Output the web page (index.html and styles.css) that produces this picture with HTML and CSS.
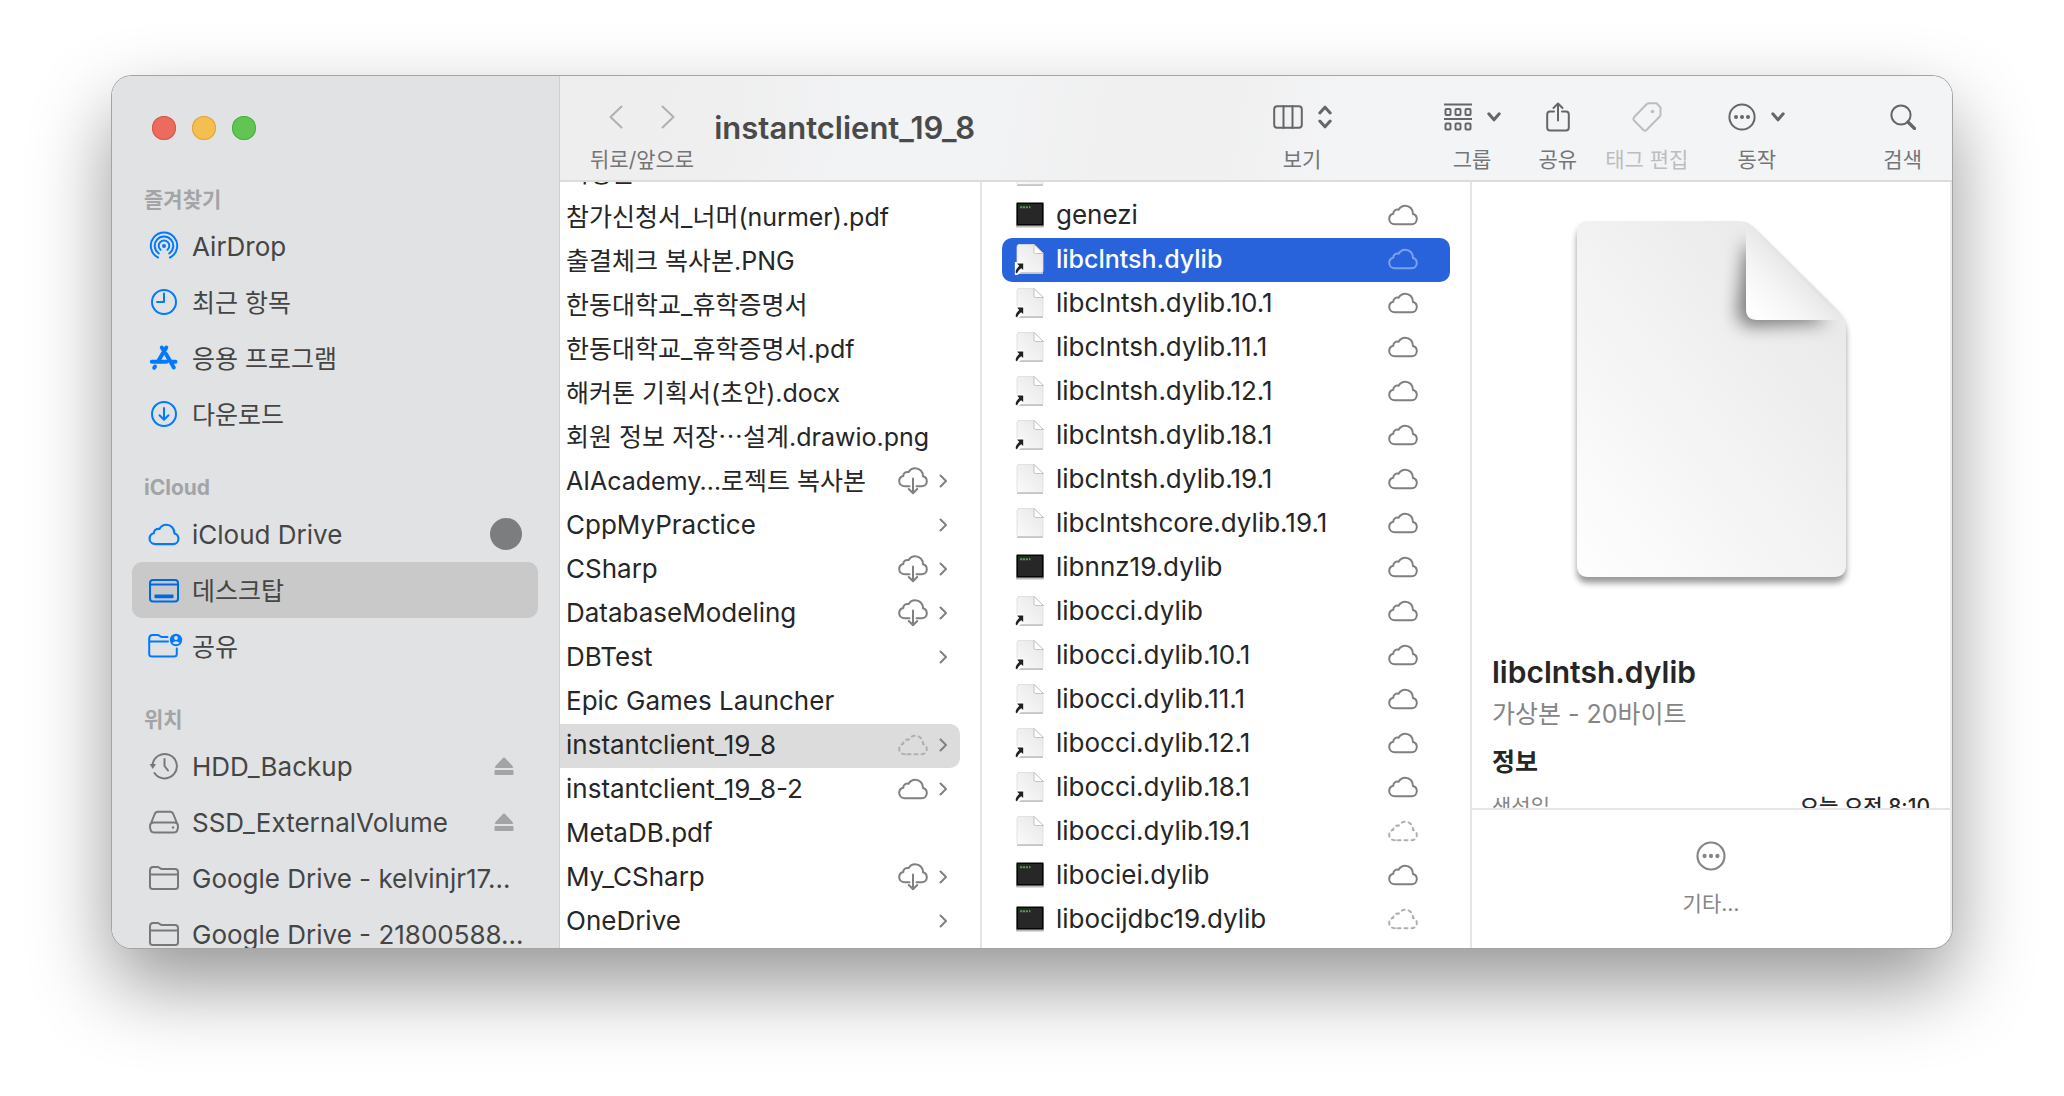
FILE: index.html
```
<!DOCTYPE html>
<html lang="ko">
<head>
<meta charset="utf-8">
<meta name="viewport" content="width=device-width, initial-scale=1">
<title>instantclient_19_8</title>
<link rel="stylesheet" href="styles.css">
</head>
<body>
<svg class="sprite" aria-hidden="true">
  <defs>
    <linearGradient id="paper" x1="1" y1="0" x2="0" y2="1">
      <stop offset="0" stop-color="#e6e6e6"/><stop offset="1" stop-color="#fbfbfb"/>
    </linearGradient>
  </defs>
  <symbol id="cloud" viewBox="0 0 30 22"><path d="M7 20.2C3.600 20.200 1.200 17.900 1.200 15C1.200 12.300 2.900 10.300 5.300 9.800C5.100 7.100 7.700 5 10.600 5.800C12 3.200 14.200 1.700 17.200 1.700C21.700 1.700 25 5.200 25 10C27.300 10.600 28.800 12.500 28.800 15C28.800 18 26.700 20.200 23.700 20.200Z"/></symbol>
  <symbol id="cloud-down" viewBox="0 0 30 28"><path d="M11.500 19.200H7C3.600 19.200 1.200 17 1.200 14.200C1.200 11.500 2.900 9.500 5.300 9C5.100 6.400 7.700 4.300 10.600 5.100C12 2.600 14.200 1.200 17.200 1.200C21.700 1.200 25 4.600 25 9.300C27.300 9.900 28.800 11.700 28.800 14.200C28.800 17.100 26.700 19.200 23.700 19.200H18.500M15 11.500V26M10.800 22L15 26.200L19.200 22"/></symbol>
  <symbol id="chev" viewBox="0 0 8 14"><path d="M1.500 1.500L7 7L1.500 12.500"/></symbol>
  <symbol id="down" viewBox="0 0 14 10"><path d="M1.800 1.800L7 7.800L12.200 1.800"/></symbol>
  <symbol id="folder" viewBox="0 0 32 32"><path d="M2 24.500V8.500Q2 5 5 5H9.500C11.500 5 12 7 14 7H27Q30 7 30 10V24.500Q30 27 27 27H5Q2 27 2 24.500ZM2 12.500H30"/></symbol>
  <symbol id="eject" viewBox="0 0 32 32"><path d="M15.200 7.800Q16 7 16.800 7.800L24.800 16.200Q25.800 18 24 18H8Q6.200 18 7.200 16.200Z"/><rect x="6.500" y="20" width="19" height="5" rx="1"/></symbol>
  <symbol id="doc" viewBox="0 0 28 30"><path d="M3 .5H18L27 9V27Q27 29 25 29H3Q1 29 1 27V2.500Q1 .5 3 .5Z" fill="url(#paper)" stroke="#dcdcdc" stroke-width=".8"/><path d="M2 29.200H26" stroke="#c4c4c4"/><path d="M18 .8V8Q18 9.500 19.500 9.500H27Z" fill="#fff" stroke="#bdbdbd" stroke-width=".9"/></symbol>
  <symbol id="alias" viewBox="0 0 10 14"><path d="M0 0H10V10H7.500L3 14H0Z" fill="#fff"/><path d="M2.500 1.500H9V8.500L6.800 6.600C4.800 8 3.300 9.600 2.300 12.500L.8 11C1.300 8 2.800 5.800 4.700 4.200Z" fill="#222"/></symbol>
  <symbol id="exec" viewBox="0 0 28 26"><rect x="0" y="1.500" width="28" height="24" rx="1" fill="#b9b9b9"/><rect x=".5" y=".5" width="27" height="23" fill="#050505"/><rect x="2" y="2" width="24" height="20" fill="#272727"/><path d="M4 4.300h2.400v2h-2.400zM7 4.300h2v2h-2zM9.800 4.300h2.200v2h-2.200zM13 4h1.400v2.300h-1.400z" fill="#4f9a4f"/></symbol>
  <symbol id="more" viewBox="0 0 28 28"><circle cx="14" cy="14" r="12.600"/><g stroke="none" fill="currentColor"><circle cx="8" cy="14" r="2"/><circle cx="14" cy="14" r="2"/><circle cx="20" cy="14" r="2"/></g></symbol>
</svg>

<div class="window">
  <aside class="sidebar">
    <div class="lights">
      <button class="light red" aria-label="닫기"></button>
      <button class="light yellow" aria-label="최소화"></button>
      <button class="light green" aria-label="확대"></button>
    </div>
    <nav>
      <h2>즐겨찾기</h2>
      <a class="item" href="#"><svg class="ico" viewBox="0 0 32 32"><path d="M10 27.500A13.200 13.200 0 1 1 22 27.500M10.800 23.500A9.300 9.300 0 1 1 21.200 23.500M12.500 19.800A5.300 5.300 0 1 1 19.500 19.800" /><circle cx="16" cy="16" r="2" class="solid"/></svg><span>AirDrop</span></a>
      <a class="item ko" href="#"><svg class="ico" viewBox="0 0 32 32"><circle cx="16" cy="16" r="12"/><path d="M16 7.500V16H9"/></svg><span>최근 항목</span></a>
      <a class="item ko" href="#"><svg class="ico thick" viewBox="0 0 32 32"><path d="M18.300 5.500L10 19.500M13.800 5.500L15.700 8.500M18 12L25.800 25.500M3.800 19.700H18.500M24 19.700H27.500M7 24.500L6.200 25.800"/></svg><span>응용 프로그램</span></a>
      <a class="item ko" href="#"><svg class="ico" viewBox="0 0 32 32"><circle cx="16" cy="16" r="12"/><path d="M16 10V21.500M11.500 17.300L16 21.700L20.500 17.300"/></svg><span>다운로드</span></a>
      <h2>iCloud</h2>
      <a class="item" href="#"><svg class="ico" viewBox="-1 -5 32 32"><use href="#cloud" x="-1" y="0" width="32" height="23"/></svg><span>iCloud Drive</span><i class="progress"></i></a>
      <a class="item ko current" href="#"><svg class="ico" viewBox="0 0 32 32"><rect x="2" y="6" width="28" height="21.500" rx="3"/><path d="M2 10.500H30"/><rect x="6.500" y="20.500" width="19" height="3.800" rx=".8" class="solid"/></svg><span>데스크탑</span></a>
      <a class="item ko" href="#"><svg class="ico" viewBox="0 0 32 32"><path d="M19.500 7H14C12 7 11.500 5 9.500 5H4.500Q1.200 5 1.200 8.500V24Q1.200 26.500 4 26.500H26Q28.800 26.500 28.800 24V18.500M1.200 11.500H20"/><circle cx="28" cy="10" r="6.200" class="solid"/><circle cx="28" cy="8" r="1.900" fill="#e1e2e4" stroke="none"/><path d="M24.300 13Q28 9.300 31.700 13Q28 15.600 24.300 13Z" fill="#e1e2e4" stroke="none"/></svg><span>공유</span></a>
      <h2>위치</h2>
      <a class="item gray" href="#"><svg class="ico" viewBox="0 0 32 32"><path d="M4.500 15A12.200 12.200 0 1 1 6.500 23M16.500 9V16L20 20.500"/><path d="M1.500 14H8L4.800 19Z" class="solid"/></svg><span>HDD_Backup</span><svg class="eject"><use href="#eject"/></svg></a>
      <a class="item gray" href="#"><svg class="ico" viewBox="0 0 32 32"><path d="M2.500 18.500L6.500 8.500Q7.500 5.800 10 5.800H22Q24.500 5.800 25.500 8.500L29.500 18.500M6 16.500H26Q30 16.500 30 20Q30 26.500 26 26.500H6Q2 26.500 2 20Q2 16.500 6 16.500Z"/><circle cx="25" cy="21.500" r="1.200" class="solid"/></svg><span>SSD_ExternalVolume</span><svg class="eject"><use href="#eject"/></svg></a>
      <a class="item gray" href="#"><svg class="ico"><use href="#folder"/></svg><span>Google Drive - kelvinjr17…</span></a>
      <a class="item gray" href="#"><svg class="ico"><use href="#folder"/></svg><span>Google Drive - 21800588…</span></a>
    </nav>
  </aside>

  <main class="main">
    <header class="toolbar">
      <div class="tool history">
        <div class="glyphs">
          <button aria-label="뒤로"><svg width="14" height="24" viewBox="0 0 14 24"><path d="M12.500 1.500L1.500 12L12.500 22.500"/></svg></button>
          <button aria-label="앞으로"><svg width="14" height="24" viewBox="0 0 14 24"><path d="M1.500 1.500L12.500 12L1.500 22.500"/></svg></button>
        </div>
        <span>뒤로/앞으로</span>
      </div>
      <h1>instantclient_19_8</h1>
      <button class="tool view"><span class="glyphs"><svg width="30" height="26" viewBox="0 0 30 26"><rect x="1.200" y="2.200" width="27.600" height="21.600" rx="3"/><path d="M10.500 2V24M19.500 2V24"/></svg><svg class="bold" width="14" height="24" viewBox="0 0 14 24"><path d="M1.800 8L7 2.200L12.200 8M1.800 16L7 21.800L12.200 16"/></svg></span><span>보기</span></button>
      <button class="tool group"><span class="glyphs"><svg width="28" height="28" viewBox="0 0 28 28"><path d="M.5 1.500H27.500M.5 16H27.500"/><g><rect x="1.500" y="6" width="5" height="6" rx="1"/><rect x="11.500" y="6" width="5" height="6" rx="1"/><rect x="21.500" y="6" width="5" height="6" rx="1"/><rect x="1.500" y="20.500" width="5" height="6" rx="1"/><rect x="11.500" y="20.500" width="5" height="6" rx="1"/><rect x="21.500" y="20.500" width="5" height="6" rx="1"/></g></svg><svg class="bold" width="14" height="10"><use href="#down"/></svg></span><span>그룹</span></button>
      <button class="tool share"><span class="glyphs"><svg width="24" height="30" viewBox="0 0 24 30"><path d="M8 9.500H4Q1.200 9.500 1.200 12.500V25.500Q1.200 28.500 4 28.500H20Q22.800 28.500 22.800 25.500V12.500Q22.800 9.500 20 9.500H16M12 18.500V1.800M7.500 6L12 1.500L16.500 6"/></svg></span><span>공유</span></button>
      <button class="tool tag" disabled><span class="glyphs"><svg width="30" height="30" viewBox="0 0 30 30"><path d="M14.500 2.200Q15.700 1.200 17.200 1.200H24.500L28.500 5.500V12.500Q28.500 13.800 27.500 14.800L14.500 28Q13 29.200 11.500 28L2 18.500Q.8 17 2 15.300Z"/><circle cx="20.500" cy="9.500" r="1.800" class="solid"/></svg></span><span>태그 편집</span></button>
      <button class="tool action"><span class="glyphs"><svg width="28" height="28"><use href="#more"/></svg><svg class="bold" width="14" height="10"><use href="#down"/></svg></span><span>동작</span></button>
      <button class="tool search"><span class="glyphs"><svg width="26" height="26" viewBox="0 0 26 26"><circle cx="11" cy="11" r="9.600"/><path d="M18 18L24.500 24.500" stroke-width="3.200"/></svg></span><span>검색</span></button>
    </header>

    <div class="columns">
      <ul class="col folders">
        <li class="ko"><span>지정본</span></li>
        <li class="ko"><span>참가신청서_너머(nurmer).pdf</span></li>
        <li class="ko"><span>출결체크 복사본.PNG</span></li>
        <li class="ko"><span>한동대학교_휴학증명서</span></li>
        <li class="ko"><span>한동대학교_휴학증명서.pdf</span></li>
        <li class="ko"><span>해커톤 기획서(초안).docx</span></li>
        <li class="ko"><span>회원 정보 저장⋯설계.drawio.png</span></li>
        <li class="ko"><span>AIAcademy…로젝트 복사본</span><svg class="cd"><use href="#cloud-down"/></svg><svg class="go"><use href="#chev"/></svg></li>
        <li><span>CppMyPractice</span><svg class="go"><use href="#chev"/></svg></li>
        <li><span>CSharp</span><svg class="cd"><use href="#cloud-down"/></svg><svg class="go"><use href="#chev"/></svg></li>
        <li><span>DatabaseModeling</span><svg class="cd"><use href="#cloud-down"/></svg><svg class="go"><use href="#chev"/></svg></li>
        <li><span>DBTest</span><svg class="go"><use href="#chev"/></svg></li>
        <li><span>Epic Games Launcher</span></li>
        <li class="open"><span>instantclient_19_8</span><svg class="cl dashed"><use href="#cloud"/></svg><svg class="go"><use href="#chev"/></svg></li>
        <li><span>instantclient_19_8-2</span><svg class="cl"><use href="#cloud"/></svg><svg class="go"><use href="#chev"/></svg></li>
        <li><span>MetaDB.pdf</span></li>
        <li><span>My_CSharp</span><svg class="cd"><use href="#cloud-down"/></svg><svg class="go"><use href="#chev"/></svg></li>
        <li><span>OneDrive</span><svg class="go"><use href="#chev"/></svg></li>
      </ul>

      <ul class="col files">
        <li><svg class="fi"><use href="#doc"/></svg><span>BASIC_README</span></li>
        <li><svg class="fi"><use href="#exec"/></svg><span>genezi</span><svg class="cl"><use href="#cloud"/></svg></li>
        <li class="selected"><svg class="fi"><use href="#doc"/><use href="#alias" x="-2" y="18" width="11" height="13"/></svg><span>libclntsh.dylib</span><svg class="cl"><use href="#cloud"/></svg></li>
        <li><svg class="fi"><use href="#doc"/><use href="#alias" x="-2" y="18" width="11" height="13"/></svg><span>libclntsh.dylib.10.1</span><svg class="cl"><use href="#cloud"/></svg></li>
        <li><svg class="fi"><use href="#doc"/><use href="#alias" x="-2" y="18" width="11" height="13"/></svg><span>libclntsh.dylib.11.1</span><svg class="cl"><use href="#cloud"/></svg></li>
        <li><svg class="fi"><use href="#doc"/><use href="#alias" x="-2" y="18" width="11" height="13"/></svg><span>libclntsh.dylib.12.1</span><svg class="cl"><use href="#cloud"/></svg></li>
        <li><svg class="fi"><use href="#doc"/><use href="#alias" x="-2" y="18" width="11" height="13"/></svg><span>libclntsh.dylib.18.1</span><svg class="cl"><use href="#cloud"/></svg></li>
        <li><svg class="fi"><use href="#doc"/></svg><span>libclntsh.dylib.19.1</span><svg class="cl"><use href="#cloud"/></svg></li>
        <li><svg class="fi"><use href="#doc"/></svg><span>libclntshcore.dylib.19.1</span><svg class="cl"><use href="#cloud"/></svg></li>
        <li><svg class="fi"><use href="#exec"/></svg><span>libnnz19.dylib</span><svg class="cl"><use href="#cloud"/></svg></li>
        <li><svg class="fi"><use href="#doc"/><use href="#alias" x="-2" y="18" width="11" height="13"/></svg><span>libocci.dylib</span><svg class="cl"><use href="#cloud"/></svg></li>
        <li><svg class="fi"><use href="#doc"/><use href="#alias" x="-2" y="18" width="11" height="13"/></svg><span>libocci.dylib.10.1</span><svg class="cl"><use href="#cloud"/></svg></li>
        <li><svg class="fi"><use href="#doc"/><use href="#alias" x="-2" y="18" width="11" height="13"/></svg><span>libocci.dylib.11.1</span><svg class="cl"><use href="#cloud"/></svg></li>
        <li><svg class="fi"><use href="#doc"/><use href="#alias" x="-2" y="18" width="11" height="13"/></svg><span>libocci.dylib.12.1</span><svg class="cl"><use href="#cloud"/></svg></li>
        <li><svg class="fi"><use href="#doc"/><use href="#alias" x="-2" y="18" width="11" height="13"/></svg><span>libocci.dylib.18.1</span><svg class="cl"><use href="#cloud"/></svg></li>
        <li><svg class="fi"><use href="#doc"/></svg><span>libocci.dylib.19.1</span><svg class="cl dashed"><use href="#cloud"/></svg></li>
        <li><svg class="fi"><use href="#exec"/></svg><span>libociei.dylib</span><svg class="cl"><use href="#cloud"/></svg></li>
        <li><svg class="fi"><use href="#exec"/></svg><span>libocijdbc19.dylib</span><svg class="cl dashed"><use href="#cloud"/></svg></li>
      </ul>

      <section class="preview">
        <div class="details">
          <svg class="page" width="290" height="380" viewBox="0 0 290 380">
            <defs>
              <linearGradient id="sheet" x1=".9" y1=".2" x2=".1" y2="1"><stop offset="0" stop-color="#e9e9e9"/><stop offset="1" stop-color="#fefefe"/></linearGradient>
              <linearGradient id="fold" x1=".56" y1=".44" x2=".1" y2=".9"><stop offset="0" stop-color="#e4e4e4"/><stop offset=".5" stop-color="#f4f4f4"/><stop offset="1" stop-color="#fefefe"/></linearGradient>
              <filter id="soft" x="-20%" y="-20%" width="140%" height="140%"><feGaussianBlur stdDeviation="3"/></filter>
              <filter id="softer" x="-40%" y="-40%" width="180%" height="180%"><feGaussianBlur stdDeviation="9"/></filter>
              <clipPath id="outline"><path d="M22 10H174Q182 10 189 17L272 99Q280 107 280 118V354Q280 366 268 366H22Q11 366 11 354V22Q11 10 22 10Z"/></clipPath>
            </defs>
            <path filter="url(#soft)" opacity=".4" d="M22 16H174Q182 16 189 23L272 105Q280 113 280 124V360Q280 372 268 372H22Q11 372 11 360V28Q11 16 22 16Z"/>
            <g clip-path="url(#outline)">
              <path fill="url(#sheet)" d="M0 0H290V380H0Z"/>
              <path filter="url(#softer)" opacity=".5" d="M180 30L172 98Q170 114 186 115L262 111L180 30Z"/>
              <path fill="url(#fold)" d="M180 11V98Q180 109 191 109H277Z"/>
            </g>
          </svg>
          <h3>libclntsh.dylib</h3>
          <p class="kind">가상본 - 20바이트</p>
          <h4>정보</h4>
          <dl><dt>생성일</dt><dd>오늘 오전 8:10</dd></dl>
        </div>
        <footer>
          <button class="etc"><svg width="30" height="30"><use href="#more"/></svg><span>기타…</span></button>
        </footer>
      </section>
    </div>
  </main>
</div>
</body>
</html>
```
FILE: styles.css
```
* { box-sizing: border-box; margin: 0; padding: 0; }

body {
  background: #fff;
  color: #262626;
  font-family: Inter, "Noto Sans CJK KR", sans-serif;
  font-size: 26px;
  line-height: 44px;
  overflow: hidden;
}

button {
  border: 0;
  background: none;
  color: inherit;
  font: inherit;
}

svg {
  flex: none;
  fill: none;
  stroke: currentColor;
  stroke-width: 2;
  stroke-linecap: round;
  stroke-linejoin: round;
}

.sprite { position: absolute; width: 0; height: 0; }
.solid { fill: currentColor; stroke: none; }
.ko { font-size: 25px; }

.window {
  display: flex;
  height: calc(100vh - 224px);
  margin: 76px 112px 148px;
  border-radius: 20px;
  overflow: hidden;
  background: #fff;
  box-shadow: 0 0 0 1px #a4a4a4, 0 36px 80px rgba(0, 0, 0, .42);
}

/* Sidebar */
.sidebar {
  flex: 0 0 448px;
  overflow: hidden;
  background: #e1e2e4;
  border-right: 1px solid #cfd0d2;
}

.lights { display: flex; gap: 16px; padding: 40px 40px 14px; }
.light { width: 24px; height: 24px; border-radius: 50%; }
.red { background: #ec6a5e; box-shadow: inset 0 0 0 1px #d5564b; }
.yellow { background: #f4bf4f; box-shadow: inset 0 0 0 1px #d9a43c; }
.green { background: #61c554; box-shadow: inset 0 0 0 1px #4cad40; }

.sidebar h2 {
  padding: 28px 32px 0;
  color: #a3a4a6;
  font-size: 21px;
  line-height: 36px;
  font-weight: 700;
}

.item {
  display: flex;
  align-items: center;
  gap: 12px;
  height: 56px;
  margin: 0 21px 0 20px;
  padding: 0 16px;
  border-radius: 10px;
  color: #454545;
  text-decoration: none;
  white-space: nowrap;
}
.item span { flex: 1; padding-top: 2px; }
.current { background: #c9c9c9; }
.ico { width: 32px; height: 32px; color: #007aff; overflow: visible; }
.thick { stroke-width: 4; }
.current .ico { color: #0068e6; }
.gray .ico { color: #77787a; }
.eject { width: 32px; height: 32px; margin-right: 2px; fill: #a3a4a6; stroke: none; }
.progress { width: 32px; height: 32px; border-radius: 50%; background: #7c7d7f; }

/* Toolbar */
.main { flex: 1; display: flex; flex-direction: column; min-width: 0; }

.toolbar {
  display: flex;
  align-items: flex-start;
  height: 106px;
  padding: 24px 30px 0;
  background: linear-gradient(100deg, #eee 0, #efefef 12%, #f2f3f5 22%, #f2f3f5 30%, #f0f0f0 40%, #f0f0f0 48%, #f3f4f6 56%);
  border-bottom: 2px solid #dcdcdd;
}

.toolbar h1 {
  margin: 6px auto 0 20px;
  color: #4a4a4b;
  font-size: 31px;
  font-weight: 600;
}

.tool {
  display: flex;
  flex-direction: column;
  align-items: center;
  font-size: 21px;
  line-height: 32px;
  color: #747577;
  white-space: nowrap;
}
.tool svg { color: #656668; }
.glyphs { display: flex; align-items: center; justify-content: center; gap: 15px; height: 34px; margin-bottom: 10px; }
.bold { stroke-width: 3; }
.history .glyphs { gap: 38px; }
.history .glyphs button { display: flex; }
.history .glyphs svg { color: #b0b0b1; }
.group { margin-left: 112px; }
.share { margin-left: 38px; }
.tag { margin-left: 28px; }
.action { margin-left: 40px; }
.search { margin-left: 98px; }
.tag, .tag svg { color: #bcbdbf; }

/* Columns */
.columns { flex: 1; display: flex; min-height: 0; }

.col {
  overflow: hidden;
  list-style: none;
  border-right: 2px solid #e5e5e5;
  white-space: nowrap;
}
.col li { display: flex; align-items: center; height: 44px; }
.col li span { flex: 1; }

.folders { flex: 0 0 422px; padding-right: 20px; }
.folders li { padding: 0 13px 2px 6px; gap: 11px; border-radius: 0 10px 10px 0; }
.folders li:first-child { margin-top: -30px; }
.open { background: #dcdcdc; }

.files { flex: 0 0 490px; padding: 0 20px; }
.files li { padding: 0 32px 2px 14px; gap: 12px; border-radius: 10px; }
.files li:first-child { margin-top: -32px; }
.files .selected { background: #2863db; color: #fff; font-size: 25px; font-weight: 500; }

.fi { width: 28px; height: 30px; stroke: none; overflow: visible; }
.cl { width: 30px; height: 22px; color: #808080; }
.cd { width: 30px; height: 28px; color: #808080; }
.go { width: 8px; height: 14px; color: #808080; }
.dashed { color: #b0b0b0; stroke-dasharray: 3 4; }
.selected .cl { color: #7ba0ee; }

/* Preview */
.preview { flex: 1; display: flex; flex-direction: column; min-width: 0; border-right: 2px solid #ececec; }
.details { flex: 1; min-height: 0; overflow: hidden; padding: 29px 20px 0; line-height: 40px; }
.page { display: block; margin: 0 auto 61px; stroke: none; fill: #000; }
.details h3 { font-size: 30px; font-weight: 600; }
.kind { margin-bottom: 6px; color: #858585; font-size: 25px; line-height: 44px; }
.details h4 { font-size: 25px; font-weight: 700; }
.details dl { display: flex; justify-content: space-between; margin-top: 5px; font-size: 21px; }
.details dt { color: #858585; }
.details dd { font-weight: 500; }

.preview footer {
  display: flex;
  justify-content: center;
  align-items: flex-start;
  height: 140px;
  padding-top: 31px;
  border-top: 2px solid #e5e5e5;
}
.etc { display: flex; flex-direction: column; align-items: center; gap: 17px; color: #858585; font-size: 21px; line-height: 32px; }
```
